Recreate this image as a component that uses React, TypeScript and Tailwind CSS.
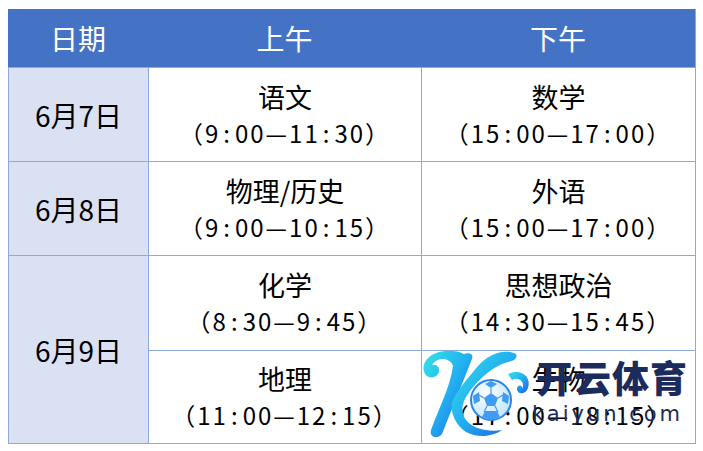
import React from "react"

const rows = [
  { date: "6月7日", am: ["语文", "（9:00—11:30）"], pm: ["数学", "（15:00—17:00）"] },
  { date: "6月8日", am: ["物理/历史", "（9:00—10:15）"], pm: ["外语", "（15:00—17:00）"] },
]

// colons in the source look spaced out, so give them some room
function Time({ text }: { text: string }) {
  const parts = text.split(":")
  return (
    <span className="text-[24px] leading-[36px] tracking-[2px] [text-spacing-trim:space-all]">
      {parts.map((p, i) => (
        <React.Fragment key={i}>
          {i > 0 && <span className="mx-[3px]">:</span>}
          {p}
        </React.Fragment>
      ))}
    </span>
  )
}

function Cell({ lines }: { lines: string[] }) {
  return (
    <div className="flex flex-col items-center justify-center border-l border-t border-[#8eaadb] bg-white text-black">
      <span className="text-[27px] leading-[36px]">{lines[0]}</span>
      <Time text={lines[1]} />
    </div>
  )
}

function Watermark() {
  return (
    <div className="pointer-events-none absolute left-[412px] top-[344px] flex items-start">
      <svg width="126" height="100" viewBox="0 0 126 100">
        <defs>
          <linearGradient id="kg" x1="0" y1="0" x2="1" y2="1">
            <stop offset="0" stopColor="#34e3e6" />
            <stop offset="0.5" stopColor="#22aef0" />
            <stop offset="1" stopColor="#1f5fe6" />
          </linearGradient>
          <radialGradient id="bg" cx="0.4" cy="0.35" r="0.7">
            <stop offset="0" stopColor="#ffffff" />
            <stop offset="1" stopColor="#bfe3ff" />
          </radialGradient>
        </defs>
        {/* left stem with top curl */}
        <path
          d="M52 10 C40 4 20 6 13 18 C8 28 16 37 24 32 C30 28 27 19 20 21 C25 13 38 13 41 22 C38 44 26 66 19 86 C17 93 25 96 30 90 C38 70 50 40 60 15 C62 10 57 8 52 10 Z"
          fill="url(#kg)"
        />
        {/* right arm */}
        <path
          d="M104 10 C92 4 76 10 66 22 C54 36 44 48 40 58 C38 66 42 80 54 88 C66 95 82 92 90 86 C78 88 62 86 54 76 C48 68 50 58 56 50 C64 38 80 22 96 18 C102 17 106 14 104 10 Z"
          fill="url(#kg)"
        />
        {/* right curl */}
        <path
          d="M96 30 C108 24 120 32 116 44 C113 52 104 50 105 44 C106 40 111 41 110 45 C114 38 106 32 100 36 Z"
          fill="url(#kg)"
        />
        {/* ball */}
        <circle cx="79" cy="56" r="20" fill="url(#bg)" stroke="#2a86e8" strokeWidth="2" />
        <polygon points="79,49 86,54 83,62 75,62 72,54" fill="#3f9cf0" />
        <polygon points="79,37 85,40 79,44 73,40" fill="#3f9cf0" />
        <polygon points="91,48 97,52 96,60 90,57" fill="#3f9cf0" />
        <polygon points="67,48 61,52 62,60 68,57" fill="#3f9cf0" />
        <polygon points="73,67 85,67 88,73 79,76 70,73" fill="#3f9cf0" />
        <path d="M79 49 L79 44 M86 54 L91 51 M72 54 L67 51 M83 62 L86 68 M75 62 L72 68" stroke="#3f9cf0" strokeWidth="1.2" />
      </svg>
      <div className="ml-[-2px] mt-[14px] flex flex-col text-[#1b2b5c]">
        <span className="text-[37px] font-black leading-[38px] tracking-[1px]">开云体育</span>
        <span className="ml-[-4px] mt-[6px] text-[21px] leading-[24px] tracking-[3px]" style={{ fontFamily: "'DejaVu Sans', sans-serif" }}>
          kaiyun.com
        </span>
      </div>
    </div>
  )
}

export default function App() {
  return (
    <div className="relative h-[451px] w-[703px] bg-white pl-[8px] pt-[9px]" style={{ fontFamily: "'Noto Sans CJK SC', 'Noto Sans', sans-serif" }}>
      <div className="w-[688px] border-b border-r border-[#8eaadb]">
        <div className="flex h-[58px] bg-[#4472c4] text-[28px] text-white">
          <div className="flex w-[140px] items-center justify-center">日期</div>
          <div className="flex w-[273px] items-center justify-center">上午</div>
          <div className="flex flex-1 items-center justify-center">下午</div>
        </div>
        <div className="grid grid-cols-[140px_273px_274px] grid-rows-[94px_94px_95px_93px]">
          {rows.map((r) => (
            <React.Fragment key={r.date}>
              <div className="flex items-center justify-center border-l border-t border-[#8eaadb] bg-[#d9e1f2] text-[28px] text-black">
                {r.date}
              </div>
              <Cell lines={r.am} />
              <Cell lines={r.pm} />
            </React.Fragment>
          ))}
          <div className="row-span-2 flex items-center justify-center border-l border-t border-[#8eaadb] bg-[#d9e1f2] text-[28px] text-black">
            6月9日
          </div>
          <Cell lines={["化学", "（8:30—9:45）"]} />
          <Cell lines={["思想政治", "（14:30—15:45）"]} />
          <Cell lines={["地理", "（11:00—12:15）"]} />
          <Cell lines={["生物", "（17:00—18:15）"]} />
        </div>
      </div>
      <Watermark />
    </div>
  )
}
